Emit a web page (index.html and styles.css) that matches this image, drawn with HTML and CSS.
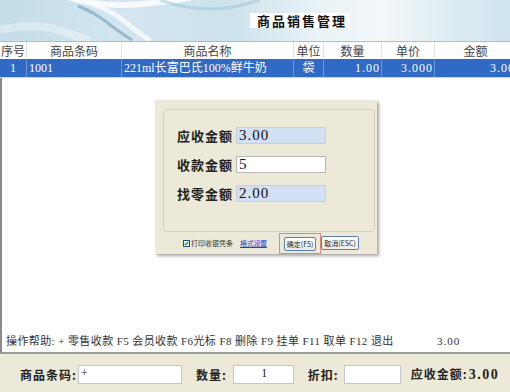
FILE: index.html
```html
<!DOCTYPE html>
<html lang="zh-CN">
<head>
    <meta charset="UTF-8">
    <title>商品销售管理</title>
    <link rel="stylesheet" href="styles.css">
</head>
<body>

<div class="app">
    <header class="banner">
        <svg class="swirl" width="510" height="41" viewBox="0 0 510 41">
            <path d="M70 -2 C110 10 150 4 190 -2" stroke="#ffffff" stroke-width="6" fill="none" opacity="0.8"/>
            <path d="M78 6 C100 14 112 28 132 40" stroke="#7fa8c2" stroke-width="3" fill="none" opacity="0.7"/>
            <path d="M92 4 C118 12 128 26 150 41" stroke="#ffffff" stroke-width="5" fill="none" opacity="0.7"/>
            <path d="M0 30 C40 20 60 30 90 41" stroke="#ffffff" stroke-width="8" fill="none" opacity="0.35"/>
            <path d="M160 0 C200 14 230 10 260 0" stroke="#9ec2d6" stroke-width="3" fill="none" opacity="0.5"/>
        </svg>
        <h1 class="title">商品销售管理</h1>
    </header>

    <div class="grid-area">
        <div class="sales">
            <div class="row head">
                <div class="cell">序号</div>
                <div class="cell">商品条码</div>
                <div class="cell">商品名称</div>
                <div class="cell">单位</div>
                <div class="cell">数量</div>
                <div class="cell">单价</div>
                <div class="cell">金额</div>
            </div>
            <div class="row selected">
                <div class="cell c">1</div>
                <div class="cell l">1001</div>
                <div class="cell l">221ml长富巴氏100%鲜牛奶</div>
                <div class="cell c">袋</div>
                <div class="cell r">1.00</div>
                <div class="cell r">3.000</div>
                <div class="cell r">3.00</div>
            </div>
        </div>

        <div class="filler">
            <div class="help">
                <span>操作帮助: + 零售收款 F5 会员收款 F6光标 F8 删除 F9 挂单 F11 取单 F12 退出</span>
                <span class="help-total">3.00</span>
            </div>
        </div>

        <div class="dialog">
            <div class="group">
                <div class="field">
                    <label>应收金额</label>
                    <div class="box readonly">3.00</div>
                </div>
                <div class="field">
                    <label>收款金额</label>
                    <div class="box">5</div>
                </div>
                <div class="field">
                    <label>找零金额</label>
                    <div class="box readonly">2.00</div>
                </div>
            </div>
            <div class="dialog-foot">
                <span class="check">
                    <svg width="7" height="7" viewBox="0 0 7 7">
                        <rect x="0.5" y="0.5" width="6" height="6" fill="#fff" stroke="#1c5180"/>
                        <path d="M1.6 3.5 L2.9 4.9 L5.3 2" stroke="#21a121" stroke-width="1.2" fill="none"/>
                    </svg>
                    打印收银凭条
                </span>
                <a href="#" class="link">格式设置</a>
                <span class="focus-mark"><button class="btn">确定(F5)</button></span>
                <button class="btn">取消(ESC)</button>
            </div>
        </div>
    </div>

    <div class="entry-bar">
        <span class="lbl">商品条码:</span>
        <div class="entry w-code">+</div>
        <span class="lbl">数量:</span>
        <div class="entry w-qty">1</div>
        <span class="lbl">折扣:</span>
        <div class="entry w-disc"></div>
        <span class="lbl due">应收金额:<span class="num">3.00</span></span>
    </div>
</div>

</body>
</html>
```

FILE: styles.css
```css
body {
    margin: 0;
    font-family: "Liberation Serif", "Noto Sans CJK SC", serif;
    color: #222;
    background-color: #fff;
}

.app {
    width: 510px;
    height: 392px;
    overflow: hidden;
    display: flex;
    flex-direction: column;
}

.banner {
    position: relative;
    height: 42px;
    flex: none;
    border-bottom: 1px solid #b4bcc2;
    background: linear-gradient(90deg, #c4dde9 0%, #d3e6ef 25%, #cde2ec 45%, #e9f2f6 62%, #f2f7f9 75%, #dcebf2 90%, #cfe4ee 100%);
    display: flex;
    align-items: center;
    padding: 0 0 1px 250px;
    box-sizing: border-box;
}

.swirl {
    position: absolute;
    left: 0;
    top: 0;
}

.title {
    position: relative;
    margin: 0;
    background-color: #fff;
    font-family: "Noto Sans CJK SC", sans-serif;
    font-size: 13px;
    font-weight: 700;
    line-height: 15px;
    letter-spacing: 2px;
    padding: 0 3px 0 7px;
    white-space: nowrap;
    color: #111;
}

.grid-area {
    position: relative;
    flex: 1;
    display: flex;
    flex-direction: column;
}

.sales {
    flex: none;
}

.row {
    display: grid;
    grid-template-columns: 27px 95px 172px 30px 58px 53px 82px;
    width: 517px;
}

.row .cell {
    white-space: nowrap;
    overflow: hidden;
    box-sizing: border-box;
}

.head {
    height: 17px;
    line-height: 17px;
    font-family: "Noto Sans CJK SC", sans-serif;
    font-size: 12px;
    color: #444;
    text-align: center;
}

.head .cell {
    border-right: 1px solid #e2e2e2;
}

.selected {
    height: 19px;
    line-height: 18px;
    background-color: #316ac5;
    color: #fff;
    font-size: 12px;
    border-bottom: 1px solid #d4d4d4;
    box-sizing: border-box;
}

.selected .cell {
    border-right: 1px solid #7095d6;
}

.selected .c { text-align: center; }
.selected .l { padding-left: 2px; }
.selected .r { text-align: right; padding-right: 1px; letter-spacing: 1px; }

.filler {
    flex: 1;
    border-left: 2px solid #8a8a8a;
    border-bottom: 2px solid #9c9c9c;
    display: flex;
    flex-direction: column;
    justify-content: flex-end;
    padding: 0 0 4px 4px;
}

.help {
    display: flex;
    font-size: 11px;
    line-height: 14px;
    color: #333;
    white-space: nowrap;
}

.help span:first-child {
    letter-spacing: 0.4px;
}

.help-total {
    margin-left: auto;
    width: 73px;
    letter-spacing: 1px;
}

.dialog {
    position: absolute;
    left: 155px;
    top: 58px;
    width: 222px;
    height: 154px;
    background-color: #ece9d8;
    box-shadow: 2px 2px 3px rgba(0, 0, 0, 0.35);
    padding: 9px 0 0 8px;
    box-sizing: border-box;
}

.group {
    width: 212px;
    height: 123px;
    border: 1px solid #d3d0bd;
    border-radius: 4px;
    box-sizing: border-box;
    padding: 16px 0 0 13px;
    display: flex;
    flex-direction: column;
    gap: 10px;
}

.field {
    display: flex;
    align-items: center;
    gap: 3px;
}

.field label {
    width: 56px;
    font-family: "Noto Sans CJK SC", sans-serif;
    font-size: 13px;
    font-weight: 700;
    color: #222;
    letter-spacing: 1px;
}

.box {
    width: 90px;
    height: 17px;
    box-sizing: border-box;
    border: 1px solid #b8b8b8;
    background-color: #fff;
    font-size: 15px;
    line-height: 15px;
    padding-left: 2px;
    letter-spacing: 1px;
    color: #111;
}

.box.readonly {
    background-color: #d3e0f4;
    border-color: #c6cfdc;
}

.dialog-foot {
    display: flex;
    align-items: center;
    height: 22px;
    padding-left: 20px;
    font-family: "Noto Sans CJK SC", sans-serif;
    font-size: 7px;
    color: #333;
    white-space: nowrap;
}

.dialog-foot > * {
    flex: none;
}

.check {
    display: flex;
    align-items: center;
    gap: 1px;
}

.link {
    margin-left: 7px;
    color: #1a3fd8;
    text-decoration: underline;
    letter-spacing: -0.3px;
}

.focus-mark {
    margin-left: 12px;
    border: 1px solid #e38585;
    padding: 3px 4px 2px 4px;
    display: flex;
}

.btn {
    font-family: "Noto Sans CJK SC", sans-serif;
    font-size: 7px;
    color: #222;
    height: 14px;
    padding: 0 2px;
    border: 1px solid #5a7eb0;
    border-radius: 2px;
    background: linear-gradient(#ffffff, #ecebe4);
    line-height: 12px;
    white-space: nowrap;
}

.entry-bar {
    flex: none;
    height: 38px;
    background-color: #ece9d8;
    display: flex;
    align-items: center;
    padding: 2px 0 0 20px;
    box-sizing: border-box;
}

.lbl {
    font-family: "Noto Sans CJK SC", sans-serif;
    font-size: 12px;
    font-weight: 700;
    letter-spacing: 1px;
    color: #222;
    white-space: nowrap;
    margin-right: 1px;
}

.entry {
    height: 19px;
    box-sizing: border-box;
    background-color: #fff;
    border: 1px solid #c4c6cc;
    font-size: 12px;
    line-height: 15px;
    margin: 0 14px 0 0;
    padding-left: 2px;
}

.w-code { width: 104px; }
.w-qty { width: 61px; text-align: center; margin-left: 5px; }
.w-disc { width: 57px; margin-left: 4px; margin-right: 10px; }

.due .num {
    font-family: "Liberation Serif", serif;
    font-size: 14px;
    letter-spacing: 1.5px;
    margin-left: 1px;
}
```
